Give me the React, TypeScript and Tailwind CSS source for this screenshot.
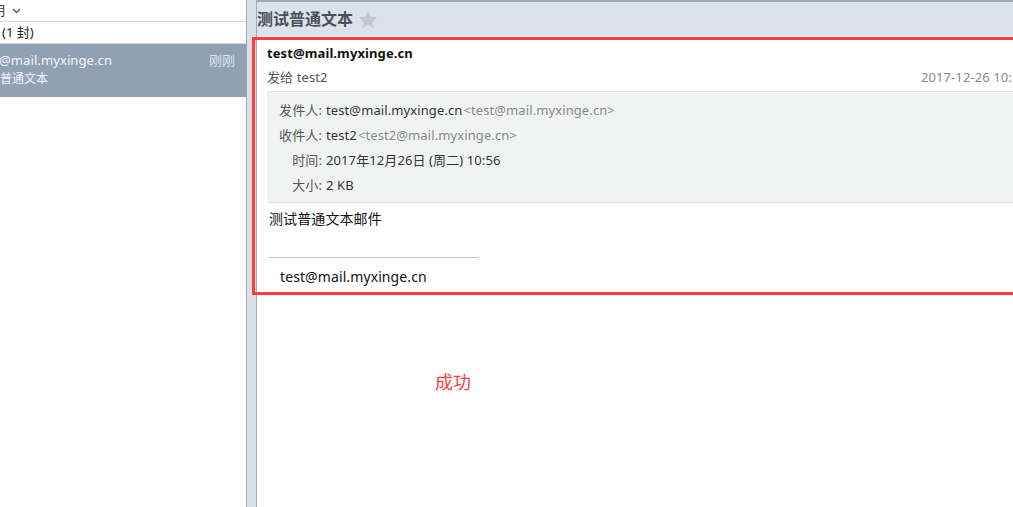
import React from "react";

const font = { fontFamily: '"Noto Sans", "Noto Sans CJK SC", sans-serif' };

function Star() {
  return (
    <svg width="20" height="19" viewBox="0 0 24 23" className="ml-[5px]">
      <path
        d="M12 0.8l3.3 7.2 7.8 0.8-5.9 5.3 1.7 7.7L12 17.8l-6.9 4 1.7-7.7L0.9 8.8l7.8-0.8z"
        fill="#c3c8ce"
      />
    </svg>
  );
}

function Chevron() {
  return (
    <svg width="9" height="6" viewBox="0 0 9 6" className="ml-[7px]">
      <path d="M1 1l3.5 3.5L8 1" stroke="#555" strokeWidth="1.3" fill="none" />
    </svg>
  );
}

function MailList() {
  return (
    <div className="w-[246px] shrink-0 bg-white">
      <div className="flex h-[22px] items-center border-b border-[#d5dae0] text-[13px] text-[#333]">
        <span className="-ml-[8px]">明</span>
        <Chevron />
      </div>
      <div className="flex h-[22px] items-center border-b border-[#d5dae0] pl-[2px] text-[13px] text-[#222]">
        (1 封)
      </div>
      <div className="h-[53px] bg-[#8fa1b3] text-[#f4f6f8]">
        <div className="flex items-center justify-between pr-[11px] pt-[7px] text-[13px] leading-[18px]">
          <span className="-ml-[1px] tracking-[0.1px]">@mail.myxinge.cn</span>
          <span className="text-[#dfe5ea]">刚刚</span>
        </div>
        <div className="pt-[1px] text-[12px] leading-[18px]">普通文本</div>
      </div>
    </div>
  );
}

function DetailRow({ label, value, extra }: { label: string; value: string; extra?: string }) {
  return (
    <div className="flex h-[25px] items-center">
      <span className="w-[43px] text-right text-[#555]">{label}:</span>
      <span className="ml-[4px] text-[#333]">{value}</span>
      {extra ? <span className="ml-[1px] text-[#888]">{extra}</span> : null}
    </div>
  );
}

function Reader() {
  return (
    <div className="relative flex min-w-0 flex-1 flex-col overflow-hidden bg-white">
      <div className="flex h-[36px] shrink-0 items-center border-t-2 border-[#9ea6b0] bg-[#dce2e9]">
        <h1 className="text-[16px] font-bold text-[#4a4f57]">测试普通文本</h1>
        <Star />
      </div>

      <div className="w-[780px] px-[10px] text-[13px] tracking-[0.1px]">
        <div className="pt-[8px] font-bold leading-[18px] text-[#111]">test@mail.myxinge.cn</div>
        <div className="mt-[6px] flex justify-between leading-[18px]">
          <span className="text-[#555]">发给 test2</span>
          <span className="text-[#8a8a8a]">2017-12-26 10:56</span>
        </div>

        <div className="mt-[5px] border-y border-[#dcdfe0] bg-[#f1f3f2] pb-[4px] pl-[12px] pt-[6px]">
          <DetailRow label="发件人" value="test@mail.myxinge.cn" extra="<test@mail.myxinge.cn>" />
          <DetailRow label="收件人" value="test2" extra="<test2@mail.myxinge.cn>" />
          <DetailRow label="时间" value="2017年12月26日 (周二) 10:56" />
          <DetailRow label="大小" value="2 KB" />
        </div>

        <div className="mt-[7px] pl-[2px] text-[14px] leading-[18px] text-[#111]">测试普通文本邮件</div>
        <div className="ml-[2px] mt-[29px] w-[210px] border-t border-[#c0c6d0]" />
        <div className="mt-[10px] pl-[13px] text-[14px] leading-[18px] text-[#111]">test@mail.myxinge.cn</div>

        <div className="mt-[84px] pl-[168px] text-[18px] leading-[24px] text-[#ff3b3b]">成功</div>
      </div>
    </div>
  );
}

export default function App() {
  return (
    <div className="relative flex h-[507px] w-[1013px] overflow-hidden bg-white" style={font}>
      <MailList />
      <div className="w-[11px] shrink-0 border-x border-[#a2abb5] bg-[#dae0e6]" />
      <Reader />
      {/* annotation box drawn over the message */}
      <div className="pointer-events-none absolute left-[252px] top-[37px] h-[258px] w-[800px] border-[3px] border-[#ff3b3b]" />
    </div>
  );
}
